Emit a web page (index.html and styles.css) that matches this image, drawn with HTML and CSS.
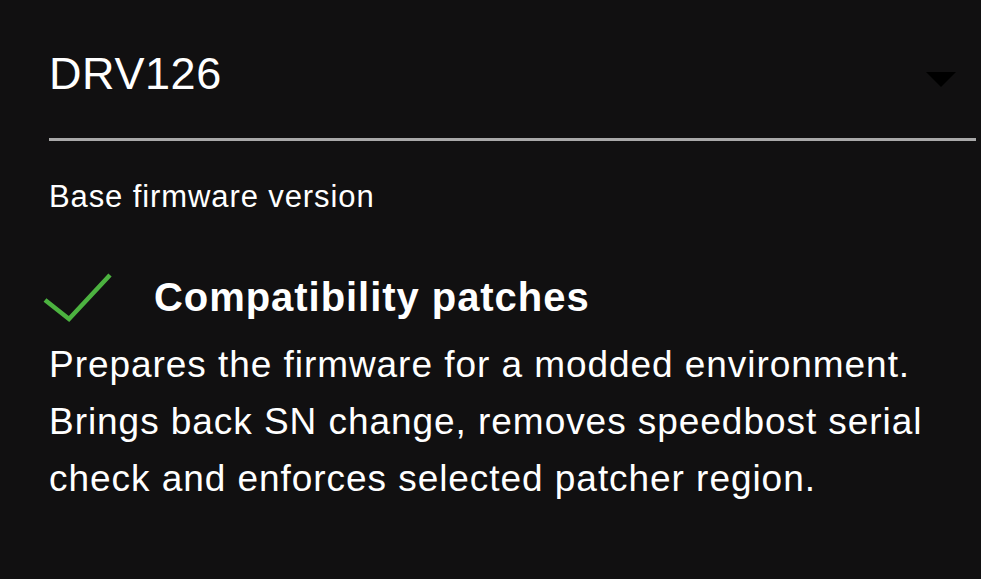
FILE: index.html
```html
<!DOCTYPE html>
<html lang="en">
<head>
    <meta charset="UTF-8">
    <meta name="viewport" content="width=device-width, initial-scale=1.0">
    <title>Firmware patches</title>
    <link rel="stylesheet" href="styles.css">
</head>
<body>
    <div class="select-header">
        <span class="select-value">DRV126</span>
        <span class="select-arrow"></span>
    </div>
    <p class="select-label">Base firmware version</p>

    <div class="patch">
        <div class="patch-title">
            <svg class="patch-check" width="72" height="52" viewBox="0 0 72 52">
                <polyline points="3,28 27,47 68,3" fill="none" stroke="#4cb240" stroke-width="4.5" />
            </svg>
            <h2>Compatibility patches</h2>
        </div>
        <p class="patch-desc">Prepares the firmware for a modded environment. Brings back SN change, removes speedbost serial check and enforces selected patcher region.</p>
    </div>
</body>
</html>
```

FILE: styles.css
```css
body {
    font-family: "Liberation Sans", Arial, sans-serif;
    margin: 0;
    padding: 48px 5px 0 49px;
    background-color: #111011;
    color: #fff;
}
.select-header {
    display: flex;
    justify-content: space-between;
    height: 52px;
    padding-bottom: 38px;
    border-bottom: 3px solid #a9a9a9;
}
.select-value {
    font-size: 45px;
    line-height: 52px;
    letter-spacing: 0.6px;
}
.select-arrow {
    width: 0;
    height: 0;
    margin: 24px 20px 0 0;
    border-left: 15px solid transparent;
    border-right: 15px solid transparent;
    border-top: 15px solid #000;
}
.select-label {
    margin: 38px 0 0;
    font-size: 31px;
    line-height: 36px;
    letter-spacing: 0.9px;
}
.patch {
    margin-top: 54px;
}
.patch-title {
    display: flex;
    align-items: flex-start;
}
.patch-check {
    margin: 3px 0 0 -7px;
    flex-shrink: 0;
}
.patch-title h2 {
    margin: 4px 0 0 40px;
    font-size: 40px;
    line-height: 48px;
    letter-spacing: 0.95px;
}
.patch-desc {
    margin: 12px 0 0;
    font-size: 37px;
    line-height: 57px;
    letter-spacing: 0.95px;
}
```
